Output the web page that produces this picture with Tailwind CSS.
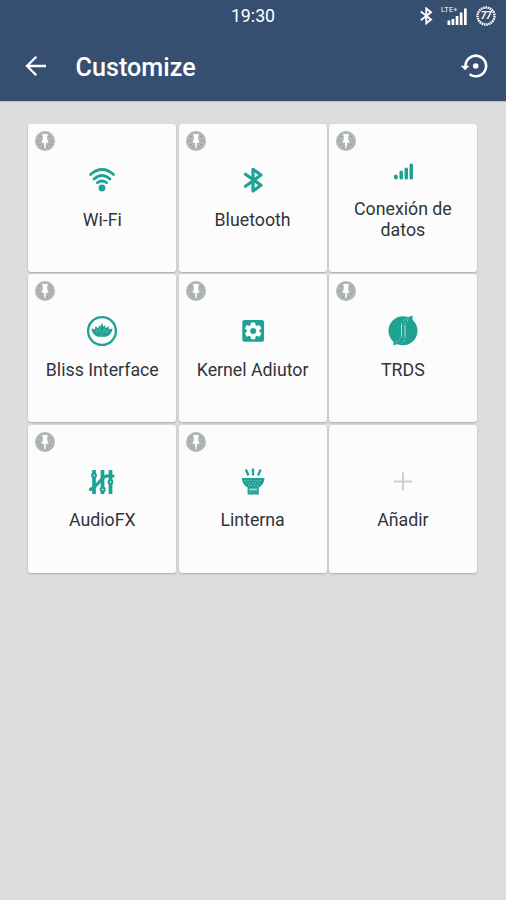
<!DOCTYPE html>
<html lang="es">
<head>
<meta charset="utf-8">
<title>Customize</title>
<script src="https://cdn.jsdelivr.net/npm/@tailwindcss/browser@4"></script>
</head>
<body class="w-[506px] h-[900px] overflow-hidden bg-[#dddddd] font-[Roboto,sans-serif] text-[#30343b]">
<svg class="hidden">
  <symbol id="pin" viewBox="0 0 20 20">
    <circle cx="10" cy="10" r="10" fill="#b0b5b6"/>
    <g fill="#7b8387"><circle cx="5" cy="5.500" r=".6"/><circle cx="3.500" cy="9.500" r=".6"/><circle cx="5" cy="13.500" r=".6"/><circle cx="7.500" cy="16" r=".6"/><circle cx="15" cy="5.500" r=".6"/><circle cx="16.500" cy="9.500" r=".6"/><circle cx="15" cy="13.500" r=".6"/><circle cx="12.500" cy="16" r=".6"/></g>
    <path d="M7.300 3h5.400v1.600l-.5.500v4l1 1v1.600h-2.300L10.600 17H9.400l-.3-5.300H6.800v-1.600l1-1v-4l-.5-.5z" fill="#fff"/>
  </symbol>
</svg>
<header class="h-[101px] bg-[#364f70] text-white flex flex-col shadow-[0_1px_0_#b9bfc7]">
  <div class="h-8 grid grid-cols-[1fr_auto_1fr] items-center">
    <span></span>
    <span class="text-[17.750px] leading-8">19:30</span>
    <div class="flex items-center justify-end pr-[10px]">
      <svg class="w-[14px] h-[18px] mr-[8px]" viewBox="0 0 14 18" fill="none" stroke="#fff" stroke-width="1.900"><path d="M1.800 4.500 12 12.600 7.300 16.300V1.500L12 5.200 1.800 13.300"/></svg>
      <div class="relative w-[27px] h-[20px] mr-[8px]">
        <span class="absolute left-0 top-0 text-[7.500px] leading-[8px] tracking-[.2px]">LTE+</span>
        <svg class="w-full h-full" viewBox="0 0 27 20" fill="#fff"><path d="M6.500 14.500h2.700V19H6.500zM10.600 13h2.700v6h-2.700zM14.700 10h2.700v9h-2.700zM18.800 6.500h2.700V19h-2.700zM23 2.500h2.700V19H23z"/></svg>
      </div>
      <div class="relative w-5 h-5">
        <svg class="w-full h-full" viewBox="0 0 20 20" fill="none" stroke="#fff"><circle cx="10" cy="10" r="8.500" stroke-width="2.400" stroke-dasharray="1.600 .7"/></svg>
        <span class="absolute inset-0 text-center text-[10px] leading-5 font-bold italic tracking-[-.3px]">77</span>
      </div>
    </div>
  </div>
  <div class="flex-1 flex items-center pl-[24px] pr-[17px] pb-[2px]">
    <svg class="w-6 h-6" viewBox="0 0 24 24" fill="none" stroke="#fff" stroke-width="2.300"><path d="M22 12H3M12.300 2.700 3 12l9.300 9.300"/></svg>
    <h1 class="ml-[27.500px] pt-[4px] text-[25.200px] leading-8 font-medium">Customize</h1>
    <svg class="ml-auto w-[28px] h-[26px]" viewBox="0 0 28 26" fill="none" stroke="#fff" stroke-width="2.600"><path d="M4.500 13A10.300 10.300 0 1 1 8.600 21.200"/><path d="M-.2 12.800h8.600L4.100 17.300z" fill="#fff" stroke="none"/><circle cx="14.700" cy="13" r="2.800" fill="#fff" stroke="none"/></svg>
  </div>
</header>
<main class="pt-[23px] pl-[28.300px]">
  <div class="grid grid-cols-[repeat(3,148px)] auto-rows-[148px] gap-x-[2.300px] gap-y-[2.400px] text-[17.750px] leading-[21px] text-center">
    <section class="relative bg-[#fcfcfc] rounded-[3px] shadow-[0_1px_2px_#a5acac] flex flex-col items-center justify-center pb-[5.500px]">
      <svg class="absolute left-[7px] top-[7px] w-5 h-5"><use href="#pin"/></svg>
      <svg class="w-10 h-10 mb-[9.500px]" viewBox="0 0 40 40" fill="none" stroke="#1fa294" stroke-width="2.700" stroke-linecap="round"><path d="M8.500 14.500Q20 4.500 31.500 14.500M12 19Q20 12 28 19M15.300 22.800Q20 19.200 24.700 22.800"/><circle cx="20" cy="28" r="3.400" fill="#1fa294" stroke="none"/></svg>
      <p>Wi-Fi</p>
    </section>
    <section class="relative bg-[#fcfcfc] rounded-[3px] shadow-[0_1px_2px_#a5acac] flex flex-col items-center justify-center pb-[5.500px]">
      <svg class="absolute left-[7px] top-[7px] w-5 h-5"><use href="#pin"/></svg>
      <svg class="w-10 h-10 mb-[9.500px]" viewBox="0 0 40 40" fill="none" stroke="#1fa294" stroke-width="3.200" stroke-linecap="round" stroke-linejoin="round"><path d="M12.500 14.300 28 25.300 20 31V9.300L28 15 12.500 26.200"/></svg>
      <p>Bluetooth</p>
    </section>
    <section class="relative bg-[#fcfcfc] rounded-[3px] shadow-[0_1px_2px_#a5acac] flex flex-col items-center justify-center pb-[5.500px]">
      <svg class="absolute left-[7px] top-[7px] w-5 h-5"><use href="#pin"/></svg>
      <svg class="w-10 h-10 mb-[9.500px]" viewBox="0 0 40 40" fill="#1fa294"><rect x="11" y="24.500" width="3.800" height="5" rx="1.900"/><rect x="16.500" y="20.500" width="3.500" height="9" rx="1.500"/><rect x="21.500" y="17.500" width="3.500" height="12" rx="1.500"/><rect x="26.500" y="13.500" width="3.500" height="16" rx="1.500"/></svg>
      <p>Conexión de<br>datos</p>
    </section>
    <section class="relative bg-[#fcfcfc] rounded-[3px] shadow-[0_1px_2px_#a5acac] flex flex-col items-center justify-center pb-[5.500px]">
      <svg class="absolute left-[7px] top-[7px] w-5 h-5"><use href="#pin"/></svg>
      <svg class="w-10 h-10 mb-[9.500px]" viewBox="0 0 40 40"><circle cx="20" cy="21" r="13.900" fill="none" stroke="#1fa294" stroke-width="2.300"/><path d="M9.500 18.500l3.500.7.500-3 2.800 2 .9-3.200 1.400 1.800L20 12.500l1.400 4.300 1.400-1.800.9 3.200 2.800-2 .5 3 3.500-.7c-.3 4-2.500 7-6.500 8.200h-8c-4-1.200-6.200-4.200-6.500-8.200z" fill="#1fa294"/><path d="M14 20l2 3M17.500 19l1 3.500M22.500 19l-1 3.500M26 20l-2 3M20 24v1.500" fill="none" stroke="#a8d9d3" stroke-width=".8" stroke-dasharray="1.200 1"/></svg>
      <p>Bliss Interface</p>
    </section>
    <section class="relative bg-[#fcfcfc] rounded-[3px] shadow-[0_1px_2px_#a5acac] flex flex-col items-center justify-center pb-[5.500px]">
      <svg class="absolute left-[7px] top-[7px] w-5 h-5"><use href="#pin"/></svg>
      <svg class="w-10 h-10 mb-[9.500px]" viewBox="0 0 40 40"><rect x="9.300" y="10" width="21.800" height="21.800" rx="2.500" fill="#1fa294"/><path transform="translate(10.100 10.800) scale(.84)" fill="#fcfcfc" d="M19.400 13c0-.3.100-.6.100-1s0-.7-.1-1l2.100-1.600c.2-.2.200-.4.100-.6l-2-3.500c-.1-.2-.4-.3-.6-.2l-2.500 1c-.5-.4-1.100-.7-1.700-1l-.4-2.600c0-.3-.2-.5-.5-.5h-4c-.2 0-.4.200-.5.400L9 5.100c-.6.300-1.100.6-1.700 1l-2.500-1c-.2-.1-.4 0-.6.200l-2 3.500c-.1.200-.1.500.1.600L4.500 11c0 .3-.1.700-.1 1s0 .7.100 1l-2.200 1.600c-.2.200-.2.400-.1.600l2 3.500c.1.200.4.300.6.200l2.500-1c.5.400 1.100.7 1.700 1l.4 2.600c0 .3.300.5.500.5h4c.3 0 .5-.2.500-.5l.4-2.600c.6-.3 1.200-.6 1.700-1l2.500 1c.2.100.5 0 .6-.2l2-3.500c.1-.2.100-.5-.1-.6L19.400 13z"/><circle cx="20.200" cy="20.900" r="3" fill="#1fa294"/></svg>
      <p>Kernel Adiutor</p>
    </section>
    <section class="relative bg-[#fcfcfc] rounded-[3px] shadow-[0_1px_2px_#a5acac] flex flex-col items-center justify-center pb-[5.500px]">
      <svg class="absolute left-[7px] top-[7px] w-5 h-5"><use href="#pin"/></svg>
      <svg class="w-10 h-10 mb-[9.500px]" viewBox="0 0 40 40"><circle cx="20" cy="20.800" r="14.500" fill="#1fa294"/><path d="M23 8l6.500-2.500v6zM17 33l-6.500 2.500v-6z" fill="#1fa294"/><path d="M18.500 26V14.500M22 15v11" fill="none" stroke="#b3ded8" stroke-width="1"/><path d="M18.500 14.500q1-5 8-6.500M18.500 26.500q-2 4.500-6 6M22 13.500l3.500-4M22 26.500q0 4-3 7" fill="none" stroke="#b3ded8" stroke-width="1" stroke-dasharray="1.500 2"/></svg>
      <p>TRDS</p>
    </section>
    <section class="relative bg-[#fcfcfc] rounded-[3px] shadow-[0_1px_2px_#a5acac] flex flex-col items-center justify-center pb-[5.500px]">
      <svg class="absolute left-[7px] top-[7px] w-5 h-5"><use href="#pin"/></svg>
      <svg class="w-10 h-10 mb-[9.500px]" viewBox="0 0 40 40" fill="none" stroke="#1fa294"><path d="M12 9v24M20.500 9v24M28.500 9v24" stroke-width="3.700"/><path d="M8.500 28.500 12 26.500 20 18q3-3.500 5.500-3h5.500" stroke-width="3.200" stroke-linecap="round"/><g fill="#b3ded8" stroke-width="2"><circle cx="12" cy="14.500" r="1.900"/><circle cx="20.700" cy="28.500" r="2"/><circle cx="28.500" cy="21" r="1.900"/></g></svg>
      <p>AudioFX</p>
    </section>
    <section class="relative bg-[#fcfcfc] rounded-[3px] shadow-[0_1px_2px_#a5acac] flex flex-col items-center justify-center pb-[5.500px]">
      <svg class="absolute left-[7px] top-[7px] w-5 h-5"><use href="#pin"/></svg>
      <svg class="w-10 h-10 mb-[9.500px]" viewBox="0 0 40 40"><path d="M12.800 8.500l2.700 6M20 7.500V14.500M27.700 8.500l-2.700 6" fill="none" stroke="#1fa294" stroke-width="2.300"/><path d="M8.800 17h22.800q-.5 6.500-5.800 9.500V33.500H14.600v-7Q9.300 23.500 8.800 17z" fill="#1fa294"/><path d="M11.500 19.500h18M13 22h15M15 24.500h11M16.500 31h8" stroke="#8fcdc5" stroke-width="1" stroke-dasharray="1 2"/><path d="M16.200 28.500h8" stroke="#bcc9c7" stroke-width="1.800"/></svg>
      <p>Linterna</p>
    </section>
    <section class="relative bg-[#fcfcfc] rounded-[3px] shadow-[0_1px_2px_#a5acac] flex flex-col items-center justify-center pb-[5.500px]">
      <svg class="w-10 h-10 mb-[9.500px]" viewBox="0 0 40 40" fill="none" stroke="#cccece" stroke-width="2"><path d="M20 11.500v18M11 20.500h18"/></svg>
      <p>Añadir</p>
    </section>
  </div>
</main>
</body>
</html>
